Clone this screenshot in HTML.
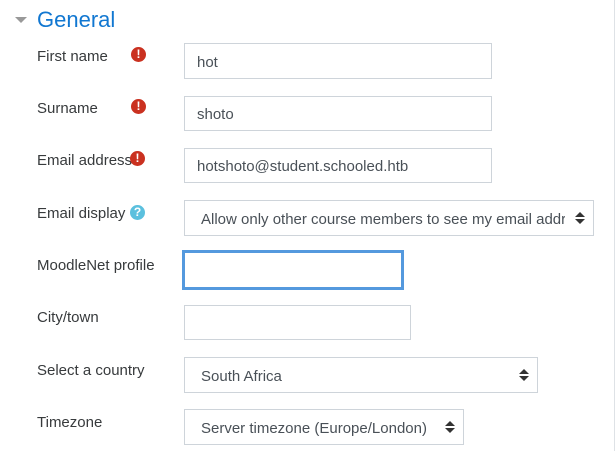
<!DOCTYPE html>
<html><head><style>
body{margin:0;width:615px;height:451px;background:#fff;font-family:"Liberation Sans",sans-serif;position:relative;overflow:hidden}
.a{position:absolute}
.l{position:absolute;left:37px;font-size:15px;color:#373a3c;line-height:18px}
.i{position:absolute;left:184px;height:34px;border:1px solid #ced4da;box-sizing:border-box;font-size:15px;color:#495057;line-height:36px;padding-left:12px;background:#fff}
.s{padding-left:16px;white-space:nowrap}
.t{display:block;overflow:hidden;white-space:nowrap}
.ar{position:absolute;right:13px;top:11px;width:0;height:0}
.ar:before{content:"";position:absolute;left:-5px;top:0;border:5px solid transparent;border-top:0;border-bottom:5px solid #333}
.ar:after{content:"";position:absolute;left:-5px;top:7px;border:5px solid transparent;border-bottom:0;border-top:5px solid #333}
.e{position:absolute;width:15px;height:15px;border-radius:50%;background:#ca3120;color:#fff;font-size:12px;font-weight:bold;text-align:center;line-height:15px}
.q{background:#5bc0de}
</style></head><body>
<div class="a" style="left:614px;top:0;width:1px;height:451px;background:#dee2e6"></div>
<div class="a" style="left:15px;top:17px;border:6px solid transparent;border-top:6px solid #999;border-bottom:0"></div>
<div class="a" style="left:37px;top:7px;font-size:22px;color:#1177d1;line-height:26px">General</div>

<div class="l" style="top:48px">First name</div><div class="e" style="left:131px;top:47px">!</div>
<div class="i" style="top:43px;width:308px;height:36px;line-height:38px">hot</div>

<div class="l" style="top:100px">Surname</div><div class="e" style="left:131px;top:99px">!</div>
<div class="i" style="top:96px;width:308px;height:35px">shoto</div>

<div class="l" style="top:152px">Email address</div><div class="e" style="left:130px;top:151px">!</div>
<div class="i" style="top:148px;width:308px;height:35px">hotshoto@student.schooled.htb</div>

<div class="l" style="top:205px">Email display</div><div class="e q" style="left:130px;top:205px">?</div>
<div class="i s" style="top:200px;width:410px;height:36px;line-height:37px"><span class="t" style="width:364px">Allow only other course members to see my email address</span><span class="ar"></span></div>

<div class="l" style="top:257px">MoodleNet profile</div>
<div class="a" style="left:182px;top:250px;width:222px;height:40px;border:3px solid #5499de;box-sizing:border-box;background:#fff"></div>

<div class="l" style="top:309px">City/town</div>
<div class="i" style="top:305px;width:227px;height:35px"></div>

<div class="l" style="top:362px">Select a country</div>
<div class="i s" style="top:357px;width:354px;height:36px;line-height:37px">South Africa<span class="ar"></span></div>

<div class="l" style="top:414px">Timezone</div>
<div class="i s" style="top:409px;width:280px;height:36px;line-height:37px">Server timezone (Europe/London)<span class="ar"></span></div>
</body></html>
